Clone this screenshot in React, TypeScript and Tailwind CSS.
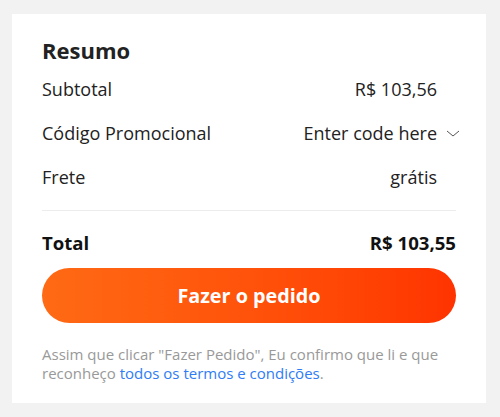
export default function App() {
  return (
    <div className="min-h-[417px] w-[500px] bg-[#f2f2f2] pt-[14px] pl-[12px] font-['Open_Sans',sans-serif]">
      <div className="w-[474px] h-[389px] bg-white px-[30px] pt-[21px]">
        <h2 className="text-[22px] leading-[30px] font-bold text-[#222]">Resumo</h2>

        <div className="mt-[8px] flex flex-col text-[18px] text-[#222]">
          <div className="flex h-[32px] items-center justify-between">
            <span>Subtotal</span>
            <span className="pr-[19px]">R$ 103,56</span>
          </div>
          <div className="mt-[12px] flex h-[32px] items-center justify-between">
            <span>Código Promocional</span>
            <span className="mr-[-3px] flex items-center">
              Enter code here
              <svg width="22" height="12" viewBox="0 0 22 12">
                <path d="M10 4 L16 9 L22 4" fill="none" stroke="#555" strokeWidth="1" />
              </svg>
            </span>
          </div>
          <div className="mt-[12px] flex h-[32px] items-center justify-between">
            <span>Frete</span>
            <span className="pr-[19px]">grátis</span>
          </div>
        </div>

        <div className="mt-[17px] h-px bg-[#ececec]" />

        <div className="mt-[19px] flex h-[26px] items-center justify-between text-[18.6px] font-bold text-[#111]">
          <span>Total</span>
          <span>R$ 103,55</span>
        </div>

        <button className="mt-[12px] h-[55px] w-full rounded-full bg-gradient-to-r from-[#ff6a14] to-[#ff3300] text-[19.8px] font-bold text-white">
          Fazer o pedido
        </button>

        <p className="mt-[22px] text-[15px] leading-[19px] text-[#999]">
          Assim que clicar "Fazer Pedido", Eu confirmo que li e que reconheço{' '}
          <span className="text-[#2e7cf6]">todos os termos e condições</span>.
        </p>
      </div>
    </div>
  );
}
